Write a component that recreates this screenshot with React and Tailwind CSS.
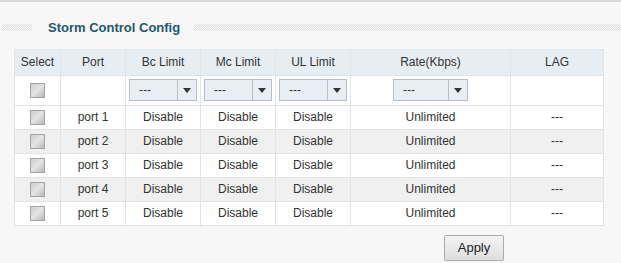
const ports = ["port 1", "port 2", "port 3", "port 4", "port 5"];

const cell = "border border-[#dde4ea] p-0 text-center font-normal";

function Check() {
  return (
    <div className="mx-auto h-[15px] w-[15px] border border-[#a3a3a3] bg-gradient-to-br from-[#cfcfcf] via-[#e4e4e4] to-[#b9b9b9]" />
  );
}

function Dropdown({ width }) {
  return (
    <div
      className={`mx-auto flex h-[22px] ${width} border border-[#b9c1c8] bg-[#e8eef3]`}
    >
      <span className="flex-1 pl-[9px] text-left leading-[20px]">---</span>
      <span className="flex w-[19px] items-center justify-center border-l border-[#b9c1c8]">
        <span className="h-0 w-0 border-x-[4px] border-t-[5px] border-x-transparent border-t-[#333]" />
      </span>
    </div>
  );
}

// dotted rule beside the section title
function Dots({ className }) {
  return (
    <div
      className={`h-[7px] bg-[conic-gradient(#e0e0e0_25%,transparent_0_50%,#e0e0e0_0_75%,transparent_0)] bg-[length:2px_2px] ${className}`}
    />
  );
}

export default function App() {
  return (
    <div className="h-[263px] w-[621px] overflow-hidden border-t-2 border-[#dcdcdc] bg-[#f7f7f7] font-['Liberation_Sans',Arial,sans-serif] text-[12px] text-[#333]">
      {/* Section title */}
      <div className="mt-[16px] flex items-center">
        <Dots className="ml-[2px] w-[30px]" />
        <h2 className="ml-[16px] mr-[14px] text-[13px] font-bold text-[#1d5a6a]">
          Storm Control Config
        </h2>
        <Dots className="flex-1" />
      </div>

      <table className="ml-[14px] mt-[11px] w-[589px] table-fixed border-collapse border border-[#d3dbe1] bg-white">
        <colgroup>
          <col className="w-[46px]" />
          <col className="w-[65px]" />
          <col className="w-[75px]" />
          <col className="w-[75px]" />
          <col className="w-[75px]" />
          <col className="w-[160px]" />
          <col className="w-[93px]" />
        </colgroup>
        <thead>
          <tr className="h-[26px] bg-[#e6eef4]">
            {["Select", "Port", "Bc Limit", "Mc Limit", "UL Limit", "Rate(Kbps)", "LAG"].map((h) => (
              <th key={h} className={cell}>
                {h}
              </th>
            ))}
          </tr>
        </thead>
        <tbody>
          <tr className="h-[30px]">
            <td className={cell}>
              <Check />
            </td>
            <td className={cell}></td>
            <td className={cell}>
              <Dropdown width="w-[68px]" />
            </td>
            <td className={cell}>
              <Dropdown width="w-[68px]" />
            </td>
            <td className={cell}>
              <Dropdown width="w-[68px]" />
            </td>
            <td className={cell}>
              <Dropdown width="w-[75px]" />
            </td>
            <td className={cell}></td>
          </tr>
          {ports.map((p, i) => (
            <tr key={p} className={`h-[24px] ${i % 2 === 1 ? "bg-[#f0f0f0]" : "bg-white"}`}>
              <td className={cell}>
                <Check />
              </td>
              <td className={cell}>{p}</td>
              <td className={cell}>Disable</td>
              <td className={cell}>Disable</td>
              <td className={cell}>Disable</td>
              <td className={cell}>Unlimited</td>
              <td className={cell}>---</td>
            </tr>
          ))}
        </tbody>
      </table>

      <div className="mt-[9px] pl-[444px]">
        <button className="h-[26px] w-[60px] rounded-[2px] border border-[#ababab] bg-gradient-to-b from-[#f4f4f4] to-[#dedede] text-[13px] text-[#222]">
          Apply
        </button>
      </div>
    </div>
  );
}
